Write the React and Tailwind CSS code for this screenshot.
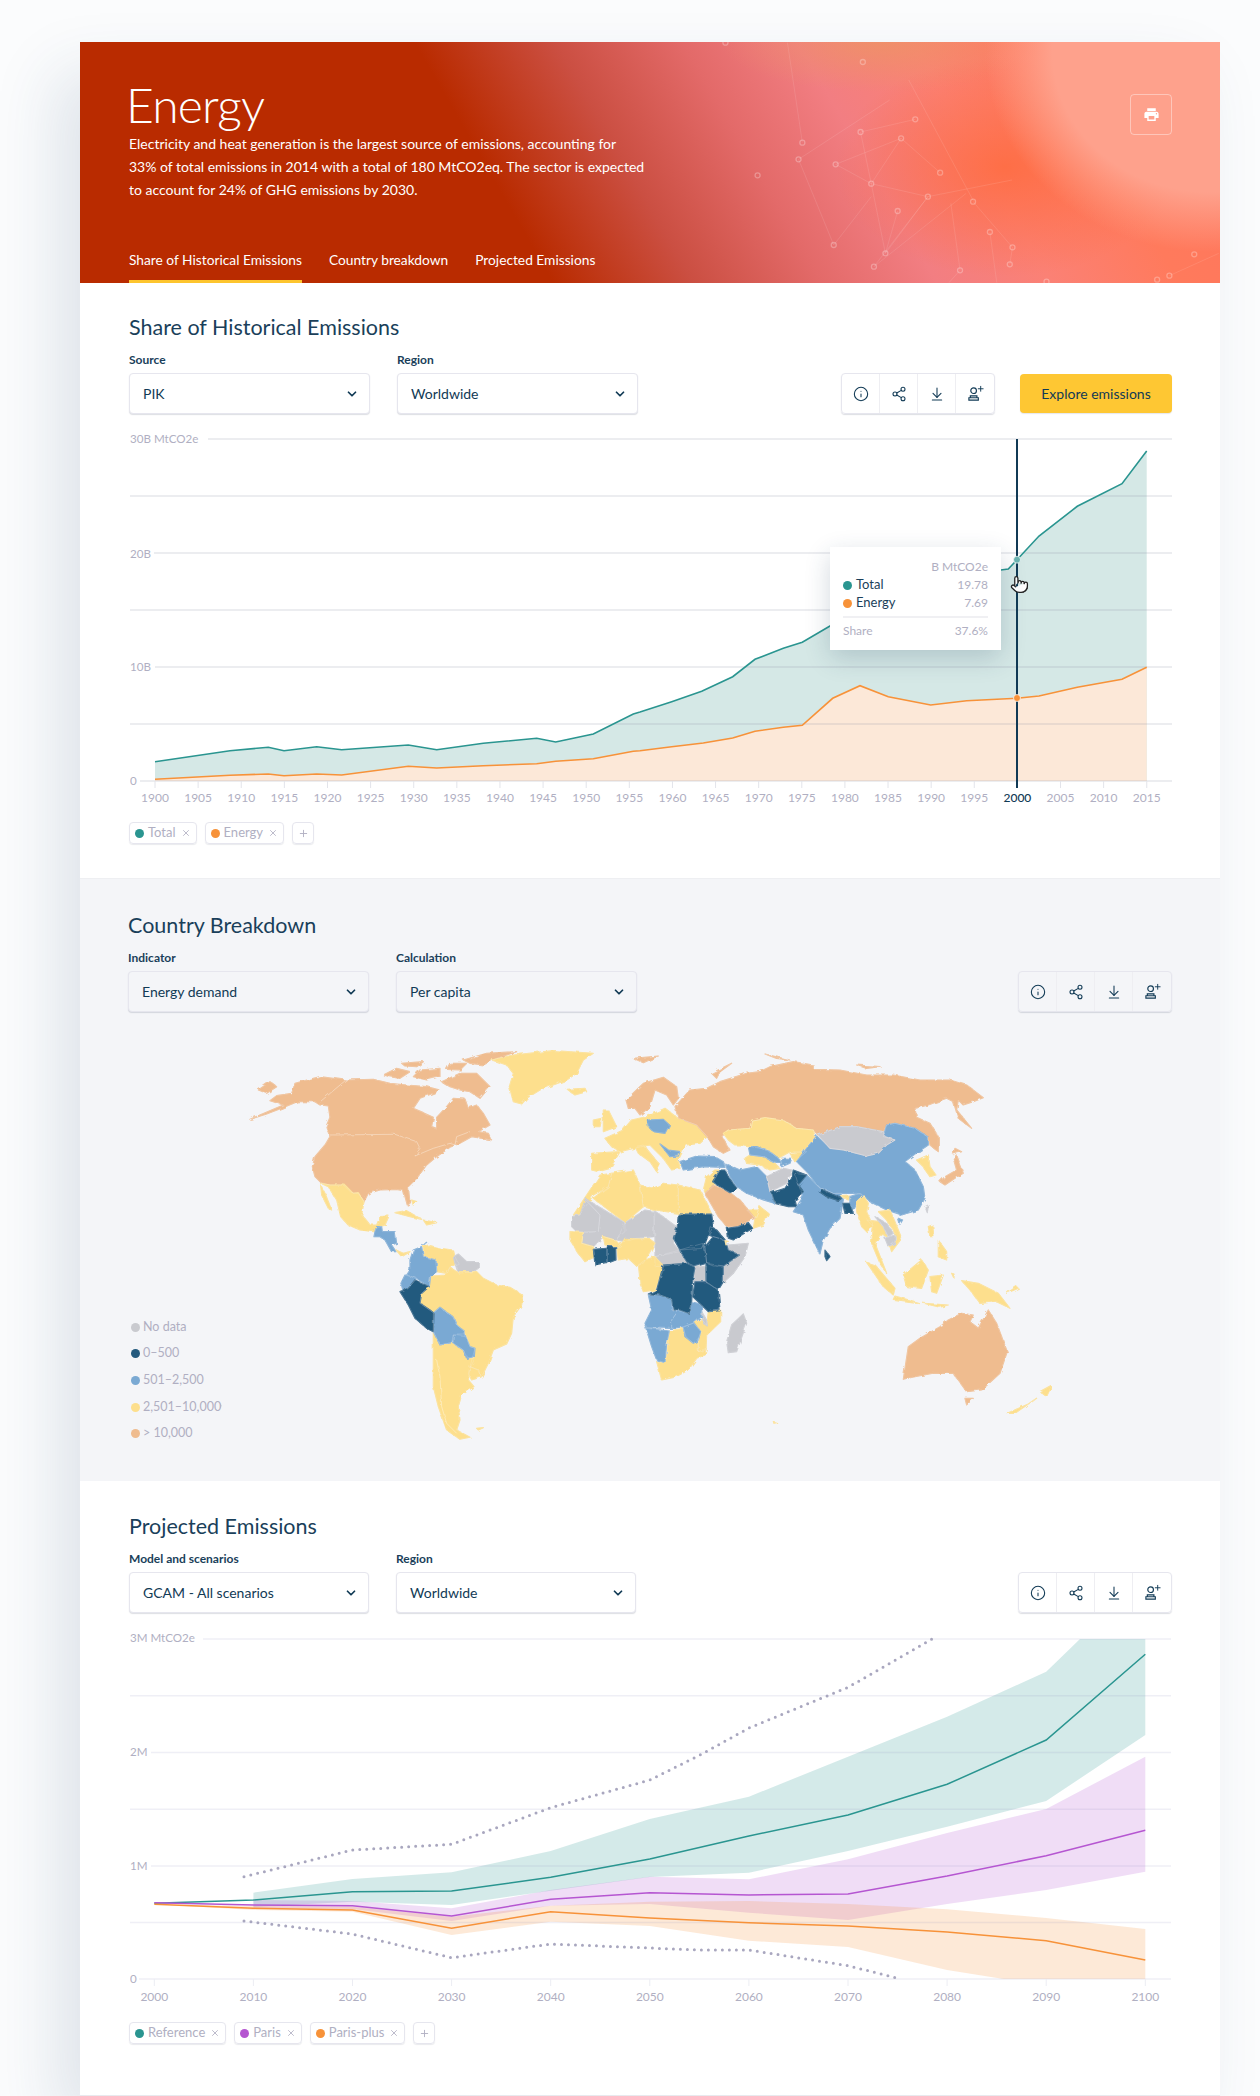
import React from 'react';
import { ChevronDown, Info, Share2, ArrowDownToLine, Plus, X, Pointer } from 'lucide-react';
import { MdPrint } from 'react-icons/md';

const TEAL = '#2a9590';
const ORANGE = '#f79239';
const PURPLE = '#b556d1';
const NAVY = '#113a55';
const MUTED = '#b0afc2';

const pts = (arr) => arr.map(([x, y]) => `${x.toFixed(1)},${y.toFixed(1)}`).join(' ');

// chart 1, read off the reference
const z10 = (a) => a.map(([x, y]) => [130 + x / 3, 600 + y / 3]);
const z11 = (a) => a.map(([x, y]) => [640 + x / 3, 430 + y / 3]);
const totalLine = [
  ...z10([[75, 485], [300, 452], [415, 442], [462, 452], [560, 440], [635, 449], [835, 435], [920, 449], [1060, 430], [1220, 415], [1277, 426], [1390, 402], [1510, 342]]),
  ...z11([[0, 846], [95, 815], [185, 784], [278, 740], [345, 688], [430, 655], [487, 637], [570, 588], [700, 520], [900, 440], [1082, 420], [1105, 417], [1131, 389], [1197, 318], [1312, 229], [1446, 161], [1520, 63]]),
];
const energyLine = [
  ...z10([[75, 538], [300, 526], [415, 522], [462, 527], [560, 522], [635, 525], [835, 499], [920, 504], [1060, 497], [1220, 491], [1277, 484], [1390, 476], [1510, 454]]),
  ...z11([[0, 962], [95, 950], [190, 939], [278, 924], [345, 904], [430, 892], [487, 886], [578, 805], [660, 767], [745, 800], [872, 825], [980, 812], [1131, 805], [1197, 798], [1312, 772], [1446, 748], [1520, 712]]),
];

const HistoricalChart = () => {
  const base = 781;
  const years = Array.from({ length: 24 }, (_, i) => 1900 + i * 5);
  const area = (l) => pts([[l[0][0], base], ...l, [l[l.length - 1][0], base]]);
  return (
    <svg viewBox="130 430 1042 375" className="block w-[1042px] h-[375px]">
      <polygon points={area(totalLine)} fill="#d5e8e6" />
      <polygon points={area(energyLine)} fill="#fce8d8" />
      {[
        [439, 208],
        [496, 130],
        [553, 154],
        [610, 130],
        [667, 155],
        [724, 130],
        [781, 140],
      ].map(([y, x]) => (
        <line key={y} x1={x} x2="1172" y1={y} y2={y} stroke="#8f93aa" strokeOpacity="0.22" strokeWidth="1.5" />
      ))}
      {years.map((y, i) => {
        const x = 155 + i * 43.12;
        return (
          <g key={y}>
            <line x1={x} x2={x} y1="781" y2="788" stroke="#e3e4ea" />
            <text x={x} y="802" textAnchor="middle" fontSize="12" fill={y === 2000 ? NAVY : MUTED} fontWeight={y === 2000 ? 500 : 400}>{y}</text>
          </g>
        );
      })}
      <text x="130" y="443" fontSize="11.6" fill={MUTED}>30B MtCO2e</text>
      <text x="130" y="557.5" fontSize="11.6" fill={MUTED}>20B</text>
      <text x="130" y="671" fontSize="11.6" fill={MUTED}>10B</text>
      <text x="130" y="785" fontSize="11.6" fill={MUTED}>0</text>
      <polyline points={pts(totalLine)} fill="none" stroke={TEAL} strokeWidth="1.6" />
      <polyline points={pts(energyLine)} fill="none" stroke={ORANGE} strokeWidth="1.6" />
      <line x1="1017" x2="1017" y1="439" y2="788" stroke={NAVY} strokeWidth="2" />
      <circle cx="1017" cy="559.7" r="3.5" fill="#6cb5b1" stroke="#fff" strokeOpacity="0.7" />
      <circle cx="1017" cy="698" r="3.5" fill={ORANGE} stroke="#fff" strokeOpacity="0.7" />
      <Pointer x="1010" y="575" width="19" height="19" fill="#fff" stroke="#222" strokeWidth="1.6" />
    </svg>
  );
};

// chart 2
const yearX = (y) => 154.3 + (y - 2000) * 9.91;
const series = (vals, start = 2000) => vals.map((v, i) => [yearX(start + i * 10), v]);
const refLine = series([1903.3, 1900, 1891.7, 1891, 1877.3, 1859, 1836, 1815, 1784.3, 1740, 1654.3]);
const parisLine = series([1902.7, 1905, 1905.7, 1916, 1899.3, 1892.7, 1895, 1894, 1876, 1855.7, 1830.3]);
const plusLine = series([1904.3, 1908.3, 1910, 1928.3, 1911.7, 1918, 1922.7, 1926, 1932, 1940.7, 1960]);
const band = (upper, lower) => pts([...upper, ...[...lower].reverse()]);

const refBand = band(
  [...series([1892.7, 1879, 1872.3, 1851, 1819, 1796.7, 1756.7, 1716.7, 1671.7], 2010), [1080, 1639], [yearX(2100), 1639]],
  series([1906.7, 1901.7, 1905, 1890.7, 1877, 1872.7, 1851, 1826.7, 1801, 1735], 2010),
);
const parisBand = band(
  series([1900, 1901, 1908.3, 1890, 1876.7, 1879.3, 1859.3, 1833, 1809, 1756.7], 2010),
  series([1908, 1909, 1921, 1905.7, 1904, 1912.7, 1920, 1904, 1890, 1871.7], 2010),
);
const plusBand = band(
  series([1904.3, 1906, 1906.7, 1916.7, 1905.7, 1901.7, 1901, 1904, 1909.3, 1918, 1929]),
  [...series([1904.3, 1910, 1911.7, 1935, 1921.7, 1926, 1940.7, 1947, 1970]), [1003.6, 1979], [yearX(2100), 1979]],
);
const dottedTop = [[244, 1876.7], [yearX(2020), 1850], [yearX(2030), 1844.3], [yearX(2040), 1807.7], [yearX(2050), 1780], [700, 1755], [yearX(2060), 1728], [yearX(2070), 1687.3], [932, 1639]];
const dottedBottom = [[244, 1921], [yearX(2020), 1934], [yearX(2030), 1957.7], [yearX(2040), 1944], [yearX(2050), 1948], [700, 1950], [yearX(2060), 1950], [yearX(2070), 1965.7], [901, 1979]];

const ProjectedChart = () => (
  <svg viewBox="130 1630 1042 375" className="block w-[1042px] h-[375px]">
    <polygon points={refBand} fill={TEAL} fillOpacity="0.2" />
    <polygon points={parisBand} fill={PURPLE} fillOpacity="0.2" />
    <polygon points={plusBand} fill={ORANGE} fillOpacity="0.2" />
    {[
      [1639, 203],
      [1695.7, 130],
      [1752.5, 151],
      [1809.3, 130],
      [1866, 151],
      [1922.5, 130],
      [1979, 139],
    ].map(([y, x]) => (
      <line key={y} x1={x} x2="1171" y1={y} y2={y} stroke="#8f8fc0" strokeOpacity="0.14" strokeWidth="1.5" />
    ))}
    {Array.from({ length: 11 }, (_, i) => 2000 + i * 10).map((y) => (
      <g key={y}>
        <line x1={yearX(y)} x2={yearX(y)} y1="1979" y2="1986" stroke="#ecedf3" />
        <text x={yearX(y)} y="2001" textAnchor="middle" fontSize="12" fill={MUTED}>{y}</text>
      </g>
    ))}
    <text x="130" y="1642" fontSize="11.6" fill={MUTED}>3M MtCO2e</text>
    <text x="130" y="1756" fontSize="11.6" fill={MUTED}>2M</text>
    <text x="130" y="1870" fontSize="11.6" fill={MUTED}>1M</text>
    <text x="130" y="1983" fontSize="11.6" fill={MUTED}>0</text>
    <polyline points={pts(dottedTop)} fill="none" stroke="#a9a7bf" strokeWidth="3" strokeLinecap="round" strokeDasharray="0 7" />
    <polyline points={pts(dottedBottom)} fill="none" stroke="#a9a7bf" strokeWidth="3" strokeLinecap="round" strokeDasharray="0 7" />
    <polyline points={pts(refLine)} fill="none" stroke={TEAL} strokeWidth="1.5" />
    <polyline points={pts(parisLine)} fill="none" stroke={PURPLE} strokeWidth="1.5" />
    <polyline points={pts(plusLine)} fill="none" stroke={ORANGE} strokeWidth="1.5" />
  </svg>
);

// map colours
const C = { o: '#efbc8f', y: '#fddf8d', b: '#7aa9d3', d: '#245a7e', g: '#c9cacf' };

// polygons in 3x crop coordinates, west half then east half
const WEST = [
  ['o', '90,268 140,252 185,235 232,215 285,215 300,225 325,228 330,262 318,290 330,320 315,345 285,380 277,410 285,440 303,458 330,465 370,465 395,488 415,490 432,515 445,490 480,480 530,478 550,482 562,525 570,520 565,470 590,445 620,405 650,380 690,352 720,340 755,320 815,330 805,310 775,305 810,285 790,250 770,225 745,235 735,207 700,205 680,230 650,262 650,295 635,290 640,262 610,248 580,235 600,205 640,190 660,180 620,170 560,165 510,160 460,148 378,150 300,140 225,160 215,190 170,197 150,212 190,225'],
  ['o', '665,155 720,130 770,130 810,170 780,205 750,185 720,180 690,170'],
  ['o', '730,90 800,70 890,65 830,85 790,105 750,100'],
  ['o', '690,100 740,100 720,120 680,118'],
  ['o', '490,135 530,115 570,125 540,145 510,140'],
  ['o', '545,100 610,95 590,110 555,108'],
  ['o', '600,120 660,115 660,140 620,150 580,140'],
  ['o', '115,180 150,155 170,170 140,190'],
  ['y', '815,90 880,75 1000,62 1120,70 1090,90 1070,130 1040,150 960,180 920,205 905,222 880,215 868,170 880,130 860,105'],
  ['y', '1042,178 1095,175 1100,185 1065,195'],
  ['y', '302,460 330,465 375,465 400,490 415,488 432,515 425,555 450,585 470,585 480,560 507,558 495,585 470,595 462,605 420,600 385,585 362,560 350,510 325,470'],
  ['y', '302,465 315,490 335,540 325,535 305,495'],
  ['b', '470,590 485,590 487,605 525,605 530,640 515,645 528,665 515,665 495,630 480,620 462,620 465,605'],
  ['y', '528,660 550,670 570,665 545,680'],
  ['y', '525,548 560,542 605,568 570,560'],
  ['y', '610,570 650,578 620,585'],
  ['y', '575,510 590,515 580,525'],
  ['y', '610,650 625,645 660,655 700,660 705,680 715,700 690,710 680,730 650,725 648,690 612,680'],
  ['g', '700,680 715,672 740,695 775,695 775,715 760,725 715,730 705,700'],
  ['y', '632,738 680,735 690,712 710,725 770,725 790,745 830,765 870,772 908,795 905,825 880,860 875,910 860,942 820,960 805,1000 785,1040 775,1020 750,1010 765,955 750,950 735,905 710,885 700,862 660,832 640,848 600,820 605,790 628,770'],
  ['y', '750,1010 780,1022 782,1042 755,1050 745,1030'],
  ['y', '640,905 660,945 695,938 730,960 745,985 765,985 750,1015 745,1050 762,1070 740,1085 725,1095 715,1130 720,1170 710,1200 750,1222 720,1228 680,1200 655,1130 640,1070 640,960'],
  ['y', '770,1195 790,1193 775,1200'],
  ['b', '620,637 605,650 580,660 570,690 570,720 560,735 590,745 628,770 632,738 650,725 648,690 610,680 605,650'],
  ['b', '555,735 590,745 565,775 550,785 543,760'],
  ['b', '640,850 660,832 700,862 710,885 735,905 735,920 700,915 695,938 660,945 640,905'],
  ['b', '700,915 735,915 750,950 765,955 763,980 740,985 730,960 700,940'],
  ['d', '540,785 565,775 585,750 628,770 605,790 600,820 630,840 642,850 640,905 620,895 585,865 565,825'],
  ['g', '0,1122 3,1127 0,1133'],
];

const EAST = [
  ['y', '10,240 25,240 50,290 10,305'],
  ['y', '-20,270 5,265 0,290 -20,290'],
  ['y', '-25,370 60,365 30,415 -5,425 -25,420'],
  ['y', '15,325 70,300 95,270 140,260 195,235 235,265 290,285 322,320 300,340 260,345 250,360 235,390 240,415 215,420 190,385 150,345 100,355 60,365 35,350'],
  ['y', '105,350 130,345 180,405 170,425 150,395 115,370'],
  ['b', '240,395 290,378 345,380 370,395 375,412 310,410 250,420'],
  ['b', '142,270 190,268 208,285 195,310 160,305 145,290'],
  ['b', '180,342 205,360 240,365 235,378 210,380'],
  ['o', '78,210 130,160 190,142 230,170 235,205 220,225 200,195 165,180 150,230 120,255 105,235 85,235'],
  ['o', '225,230 270,180 320,175 360,155 440,130 480,125 510,110 580,95 640,105 640,118 720,120 800,135 880,135 960,150 1050,150 1100,165 1150,203 1120,215 1090,225 1075,210 1070,240 1115,295 1075,265 1060,215 1040,205 985,225 945,235 950,262 990,280 1015,320 1015,365 990,345 985,322 945,295 885,280 860,285 850,305 770,290 720,290 655,315 640,300 590,295 550,270 495,263 455,270 450,295 385,300 365,320 390,360 370,370 340,350 325,325 290,285 235,265'],
  ['o', '335,130 395,100 360,125 350,145'],
  ['o', '100,85 175,78 130,98'],
  ['o', '495,72 570,90 530,85'],
  ['o', '770,105 840,110 800,115'],
  ['y', '370,310 385,300 450,295 455,270 495,263 550,270 590,295 640,300 645,320 620,350 610,365 570,365 535,385 505,360 455,350 430,345 405,345 385,330'],
  ['y', '435,385 450,375 490,380 520,395 540,415 510,420 480,405 440,400'],
  ['b', '445,350 470,350 510,365 535,385 545,400 520,395 490,380 450,375'],
  ['b', '545,385 575,385 570,400 545,410'],
  ['y', '570,370 620,365 585,395'],
  ['b', '590,395 620,355 650,318 690,355 730,360 800,378 835,370 860,345 885,330 850,320 860,285 885,280 945,295 985,322 985,345 955,365 915,395 945,420 970,470 975,505 955,540 905,555 860,540 810,515 790,495 770,490 745,490 700,490 655,470 625,430'],
  ['g', '655,315 720,290 770,290 850,305 855,320 885,330 860,345 835,370 800,378 730,360 690,355'],
  ['b', '895,565 908,570 900,583'],
  ['g', '975,530 985,525 982,548'],
  ['y', '950,390 985,375 990,410 1008,435 990,440 965,405'],
  ['o', '1020,455 1035,440 1070,420 1060,385 1070,375 1090,430 1065,445 1035,465'],
  ['o', '1065,355 1085,365 1060,372'],
  ['b', '375,400 420,420 470,410 500,440 510,480 525,520 490,510 440,490 410,470 390,440'],
  ['g', '500,440 550,415 575,420 560,460 510,485'],
  ['b', '585,430 620,435 655,470 700,490 725,490 730,510 720,565 690,595 670,630 660,672 625,600 610,555 580,545 610,500 595,465'],
  ['y', '725,500 750,498 745,510'],
  ['b', '750,500 780,490 790,495 770,520 760,545 750,520'],
  ['y', '770,515 790,495 805,520 800,545 820,590 800,605 785,590 770,545'],
  ['y', '800,570 840,575 865,620 840,615 825,640 860,730 840,700 815,640 820,590'],
  ['y', '835,545 870,540 885,575 905,625 875,665 870,650 890,630 880,600 855,565'],
  ['g', '825,560 860,580 880,610 865,620 850,590'],
  ['g', '855,625 885,615 885,640 865,650'],
  ['y', '465,565 480,530 505,550 490,585 460,595'],
  ['y', '440,540 475,540 465,565'],
  ['y', '310,480 320,440 345,420 360,420 340,455 345,465 315,490'],
  ['o', '315,490 340,465 390,488 420,510 465,565 440,575 415,590 380,590 355,560'],
  ['y', '235,465 300,480 310,500 335,552 235,552'],
  ['y', '120,465 160,475 190,460 235,465 235,550 165,540 130,530'],
  ['y', '-80,555 -30,480 0,435 35,430 25,470 -20,495 -60,555'],
  ['y', '25,470 35,430 100,420 120,465 130,530 75,578 -20,505'],
  ['g', '-85,560 -60,555 -45,510 0,555 -5,605 -70,605 -85,590'],
  ['g', '-45,505 75,578 75,605 45,630 10,620 -20,650 -55,640 -50,608 -5,605 0,555'],
  ['g', '75,578 135,540 165,545 160,620 110,625 75,635 50,630'],
  ['g', '160,540 230,590 220,640 240,665 165,680 165,625'],
  ['g', '165,680 240,660 260,700 190,708 165,710'],
  ['y', '-90,605 -50,608 -55,640 -20,650 -15,680 -45,695 -65,670 -90,630'],
  ['y', '10,620 45,630 65,650 40,650 15,645'],
  ['y', '50,650 65,640 75,625 150,628 165,640 150,665 130,700 110,708 85,685 55,690'],
  ['y', '115,705 135,690 165,680 190,708 188,725 165,780 130,785 120,760 118,730'],
  ['g', '385,645 445,640 435,680 400,730 370,758 370,710 418,675 385,660'],
  ['g', '287,712 320,708 318,755 280,755'],
  ['y', '325,845 362,840 362,875 320,915 318,960 295,965 295,925 305,905 282,880 305,868 320,885'],
  ['g', '305,845 320,870 322,888 310,880'],
  ['b', '145,795 180,795 215,808 215,840 235,842 215,870 215,895 140,893 135,880 155,840'],
  ['b', '215,870 235,842 265,850 275,818 305,825 305,860 280,880 250,890 215,895'],
  ['y', '208,903 250,895 258,920 280,940 295,925 295,965 318,955 315,975 290,985 265,1020 225,1042 185,1050 170,995 195,998 200,980'],
  ['b', '250,892 282,878 302,905 295,930 280,940 255,920'],
  ['b', '138,895 208,903 200,940 195,998 170,990 155,950'],
  ['d', '338,455 360,420 375,420 385,440 410,475 390,488 360,470'],
  ['d', '515,488 555,475 575,445 580,420 620,435 595,465 610,485 585,510 590,530 565,530 525,520'],
  ['d', '658,485 665,478 725,505 715,512 680,500'],
  ['d', '728,520 750,520 760,550 735,550'],
  ['d', '675,660 690,680 680,692 675,680'],
  ['d', '382,595 415,590 445,578 458,595 400,630 385,625'],
  ['d', '-20,658 20,655 20,697 -15,705'],
  ['d', '22,650 47,650 48,690 22,700'],
  ['d', '145,792 170,780 190,705 260,700 285,712 278,750 275,815 265,850 240,840 220,840 215,808 180,795'],
  ['d', '235,552 335,552 340,590 325,615 310,655 240,660 220,625 232,590'],
  ['d', '238,660 310,640 318,680 320,700 285,710 260,695'],
  ['d', '330,590 350,600 375,630 340,620 325,615'],
  ['d', '315,650 340,620 375,630 385,660 418,675 370,708 340,708 320,700'],
  ['y', '375,632 385,635 378,645'],
  ['d', '318,700 370,708 370,755 355,780 318,755'],
  ['d', '285,755 318,755 355,782 360,842 325,845 305,825 278,800'],
  ['g', '430,852 440,880 410,965 385,968 380,935 395,885'],
  ['y', '800,697 825,705 885,775 880,795 850,770'],
  ['y', '885,798 955,818 880,808'],
  ['y', '910,735 965,690 985,720 965,775 920,770'],
  ['y', '990,740 1030,735 1010,790 995,785'],
  ['y', '985,590 998,585 1002,620 990,620'],
  ['y', '1015,630 1040,665 1040,690 1015,680'],
  ['y', '1085,752 1135,760 1195,790 1230,835 1190,815 1140,820 1110,780'],
  ['y', '1055,730 1062,732 1062,745'],
  ['y', '1250,770 1255,775 1220,790'],
  ['y', '970,820 1045,825 1020,832'],
  ['o', '910,1048 925,950 960,925 1020,890 1045,870 1085,850 1120,855 1110,875 1135,895 1165,840 1190,880 1222,965 1200,1030 1145,1080 1100,1085 1060,1030 1000,1030 945,1040'],
  ['o', '1095,1105 1120,1105 1100,1125'],
  ['y', '1222,1150 1290,1120 1310,1105 1245,1150'],
  ['y', '1320,1085 1356,1065 1340,1100'],
  ['y', '520,1175 530,1178 522,1180'],
];

const Countries = ({ list }) => (
  <>
    {list.map(([c, p], i) => (
      <polygon key={i} points={p} fill={C[c]} stroke={C[c]} strokeWidth="3.5" strokeLinejoin="round" />
    ))}
    {list.map(([, p], i) => (
      <polygon key={i} points={p} fill="none" stroke="#f5f6f8" strokeOpacity="0.4" strokeWidth="1.4" strokeLinejoin="round" />
    ))}
  </>
);

const WorldMap = () => (
  <svg viewBox="80 1030 1140 451" className="block w-[1140px] h-[451px]">
    <defs>
      <filter id="coast" x="0" y="0" width="1" height="1">
        <feTurbulence type="fractalNoise" baseFrequency="0.16" numOctaves="2" seed="4" result="n" />
        <feDisplacementMap in="SourceGraphic" in2="n" scale="3.5" />
      </filter>
    </defs>
    <g filter="url(#coast)">
      <g transform="translate(220 1030) scale(0.3333)">
        <Countries list={WEST} />
        <polyline points="295,220 378,150" fill="none" stroke="#f8e0c8" strokeWidth="2" />
        <polyline points="330,315 525,313 560,325 590,335 600,355 585,378 640,355 690,340 705,345 710,320 750,305" fill="none" stroke="#f8e0c8" strokeWidth="2" />
        <polyline points="650,990 660,1040 665,1130 680,1180 710,1210" fill="none" stroke="#fef0c8" strokeWidth="2" />
      </g>
      <g transform="translate(600 1030) scale(0.3333)">
        <Countries list={EAST} />
      </g>
    </g>
  </svg>
);

const Select = ({ label, value, w = 'w-[241px]', bg = 'bg-white' }) => (
  <div>
    <div className="text-[12px] leading-4 font-bold text-[#1a3f5a] mb-[5px]">{label}</div>
    <div className={`${w} ${bg} h-[41px] rounded border border-[#e6e6ee] shadow-[0_1px_1px_rgba(40,50,80,0.16)] flex items-center justify-between pl-[13px] pr-[10px] text-[14px] text-[#113a55]`}>
      <span>{value}</span>
      <ChevronDown size={14} strokeWidth={3} />
    </div>
  </div>
);

const AddUser = () => (
  <svg viewBox="0 0 18 18" width="17" height="17" fill="none" stroke={NAVY} strokeWidth="1.2">
    <circle cx="7" cy="6" r="3" />
    <path d="M3.5 11.5h7v2h-7zM2 16h10v-2.5H2z" />
    <path d="M14.5 1v6M11.5 4h6" strokeWidth="1" />
  </svg>
);

const Actions = () => (
  <div className="flex h-[41px] rounded border border-[#e6e6ee] shadow-[0_1px_1px_rgba(40,50,80,0.16)] text-[#113a55] divide-x divide-[#eeeef2]">
    <div className="w-[38px] flex items-center justify-center"><Info size={16} strokeWidth={1.6} /></div>
    <div className="w-[38px] flex items-center justify-center"><Share2 size={16} strokeWidth={1.6} /></div>
    <div className="w-[38px] flex items-center justify-center"><ArrowDownToLine size={16} strokeWidth={1.6} /></div>
    <div className="w-[38px] flex items-center justify-center"><AddUser /></div>
  </div>
);

const Chip = ({ color, label }) => (
  <div className="h-[22px] flex items-center gap-[4px] px-[5px] rounded border border-[#e6e6ee] shadow-[0_1px_1px_rgba(40,50,80,0.1)] text-[13px] text-[#b0afc2]">
    <span className="w-[9px] h-[9px] rounded-full" style={{ background: color }} />
    <span>{label}</span>
    <X size={10} className="ml-[1px]" />
  </div>
);

const AddChip = () => (
  <div className="w-[22px] h-[22px] flex items-center justify-center rounded border border-[#e6e6ee] shadow-[0_1px_1px_rgba(40,50,80,0.1)] text-[#b0afc2]">
    <Plus size={11} />
  </div>
);

const NODES = [[171, 38], [530, 96], [372, 338], [362, 388], [459, 403], [524, 306], [630, 325], [255, 436], [552, 461], [700, 500], [621, 543], [732, 428], [454, 645], [589, 670], [559, 710], [784, 721], [862, 606], [921, 652], [914, 703], [818, 515], [1396, 673], [1331, 737], [1299, 749], [1010, 755], [667, 268]];
const LINKS = [
  [333, 38, 372, 338], [362, 388, 600, 210], [362, 388, 454, 645], [459, 403, 630, 325], [459, 403, 552, 461], [524, 306, 552, 461],
  [630, 325, 552, 461], [630, 325, 732, 428], [552, 461, 700, 500], [552, 461, 589, 670], [700, 500, 589, 670], [700, 500, 559, 710],
  [454, 645, 552, 500], [559, 710, 800, 490], [621, 543, 589, 670], [700, 500, 920, 450], [760, 520, 784, 721], [818, 515, 921, 652],
  [862, 606, 880, 758], [921, 652, 914, 703], [1331, 737, 1460, 670], [784, 721, 755, 758], [524, 306, 667, 268], [650, 150, 820, 515],
];
const nx = (x) => 580 + x / 2.613;
const ny = (y) => y / 3 - 12;

const HeroNetwork = () => (
  <svg viewBox="0 0 1140 241" className="absolute inset-0 w-full h-full">
    {LINKS.map(([a, b, c, d], i) => (
      <line key={i} x1={nx(a)} y1={ny(b)} x2={nx(c)} y2={ny(d)} stroke="#fff" strokeOpacity="0.1" />
    ))}
    {NODES.map(([x, y], i) => (
      <circle key={i} cx={nx(x)} cy={ny(y)} r="2.5" fill="none" stroke="#fff" strokeOpacity="0.28" strokeWidth="1.3" />
    ))}
  </svg>
);

const LEGEND = [
  ['#c9cacf', 'No data'],
  ['#245a7e', '0–500'],
  ['#7aa9d3', '501–2,500'],
  ['#fddf8d', '2,501–10,000'],
  ['#efbc8f', '> 10,000'],
];

export default function App() {
  return (
    <div className="h-[2096px] overflow-hidden bg-[#fbfcfd] pt-[42px] pl-[80px] font-['Lato',sans-serif]">
      <div className="relative w-[1140px] h-[2054px] bg-white shadow-[-24px_30px_60px_rgba(40,70,110,0.13)]">
        {/* hero */}
        <div className="relative h-[241px] overflow-hidden bg-[radial-gradient(ellipse_225px_200px_at_1130px_10px,#fea18c_70%,rgba(254,161,140,0)_100%),radial-gradient(ellipse_170px_110px_at_925px_125px,rgba(255,106,60,0.8)_0%,rgba(255,106,60,0)_100%),radial-gradient(ellipse_160px_50px_at_800px_0px,rgba(235,150,100,0.7)_0%,rgba(235,150,100,0)_100%),linear-gradient(60deg,#b92b00_0%,#b92b00_37%,#cb4f42_48%,#e36a69_58%,#f27e82_67%,#fb8175_76%,#ff7a5c_86%,#ff755c_100%)]">
          <HeroNetwork />
          <div className="relative pl-[49px] pt-[34px]">
            <h1 className="ml-[-3px] text-[48px] leading-[58px] font-light text-white tracking-[-0.8px]">Energy</h1>
            <p className="mt-[-2px] w-[516px] text-[14px] leading-[23px] text-white">
              Electricity and heat generation is the largest source of emissions, accounting for 33% of total emissions in 2014 with a total of 180 MtCO2eq. The sector is expected to account for 24% of GHG emissions by 2030.
            </p>
          </div>
          <div className="absolute right-[48px] top-[52px] w-[42px] h-[41px] rounded border border-white/40 flex items-center justify-center text-white">
            <MdPrint size={17} />
          </div>
          <div className="absolute left-[49px] bottom-0 flex gap-[27px] text-[13.75px] text-white">
            <div className="h-[46px] pt-[13px] border-b-[3px] border-[#fdc52f]">Share of Historical Emissions</div>
            <div className="h-[46px] pt-[13px]">Country breakdown</div>
            <div className="h-[46px] pt-[13px]">Projected Emissions</div>
          </div>
        </div>

        {/* share of historical emissions */}
        <section className="h-[595px] pt-[30px] px-[49px]">
          <h2 className="text-[21.5px] leading-7 text-[#1a3f5a]">Share of Historical Emissions</h2>
          <div className="mt-[11px] flex items-end">
            <div className="flex gap-[27px]">
              <Select label="Source" value="PIK" />
              <Select label="Region" value="Worldwide" />
            </div>
            <div className="ml-auto mr-[-1px] flex gap-[25px]">
              <Actions />
              <div className="w-[152px] h-[39px] mt-[1px] rounded bg-[#fec733] shadow-[0_1px_1px_rgba(40,50,80,0.12)] flex items-center justify-center text-[14px] text-[#113a55]">Explore emissions</div>
            </div>
          </div>
          <div className="relative mt-[16px] ml-[1px]">
            <HistoricalChart />
            <div className="absolute left-[700px] top-[117px] w-[171px] h-[103px] bg-white px-[13px] pt-[12px] text-[12px] shadow-[0_8px_24px_rgba(30,60,90,0.2)]">
              <div className="text-right leading-4 text-[#b0afc2]">B MtCO2e</div>
              <div className="mt-[1px] flex items-center h-[18px]">
                <span className="w-[9px] h-[9px] rounded-full bg-[#2a9590] mr-[4px]" />
                <span className="text-[#1a3f5a] text-[13px]">Total</span>
                <span className="ml-auto text-[#b0afc2]">19.78</span>
              </div>
              <div className="flex items-center h-[18px]">
                <span className="w-[9px] h-[9px] rounded-full bg-[#f79239] mr-[4px]" />
                <span className="text-[#1a3f5a] text-[13px]">Energy</span>
                <span className="ml-auto text-[#b0afc2]">7.69</span>
              </div>
              <div className="mt-[4px] pt-[4px] border-t-2 border-[#f0f0f3] flex text-[#b0afc2]">
                <span>Share</span>
                <span className="ml-auto">37.6%</span>
              </div>
            </div>
          </div>
          <div className="mt-[17px] flex gap-[8px]">
            <Chip color={TEAL} label="Total" />
            <Chip color={ORANGE} label="Energy" />
            <AddChip />
          </div>
        </section>

        {/* country breakdown */}
        <section className="relative h-[603px] bg-[#f4f5f8] border-t border-[#eeeff2] pt-[32px]">
          <div className="px-[48px]">
            <h2 className="text-[21.5px] leading-7 text-[#1a3f5a]">Country Breakdown</h2>
            <div className="mt-[11px] flex items-end">
              <div className="flex gap-[27px]">
                <Select label="Indicator" value="Energy demand" bg="bg-[#f4f5f8]" />
                <Select label="Calculation" value="Per capita" bg="bg-[#f4f5f8]" />
              </div>
              <div className="ml-auto"><Actions /></div>
            </div>
          </div>
          <div className="mt-[18px]"><WorldMap /></div>
          <div className="absolute left-[51px] top-[440px] flex flex-col gap-[10.7px]">
            {LEGEND.map(([c, t]) => (
              <div key={t} className="flex items-center gap-[3px] h-[16px] text-[12.5px] text-[#b0afc2]">
                <span className="w-[9px] h-[9px] rounded-full" style={{ background: c }} />
                {t}
              </div>
            ))}
          </div>
        </section>

        {/* projected emissions */}
        <section className="h-[615px] pt-[31px] px-[49px] border-b border-[#e8e9ee]">
          <h2 className="text-[21.5px] leading-7 text-[#1a3f5a]">Projected Emissions</h2>
          <div className="mt-[11px] flex items-end">
            <div className="flex gap-[27px]">
              <Select label="Model and scenarios" value="GCAM - All scenarios" w="w-[240px]" />
              <Select label="Region" value="Worldwide" w="w-[240px]" />
            </div>
            <div className="ml-auto mr-[-1px]"><Actions /></div>
          </div>
          <div className="mt-[17px] ml-[1px]"><ProjectedChart /></div>
          <div className="mt-[17px] flex gap-[8px]">
            <Chip color={TEAL} label="Reference" />
            <Chip color={PURPLE} label="Paris" />
            <Chip color={ORANGE} label="Paris-plus" />
            <AddChip />
          </div>
        </section>
      </div>
    </div>
  );
}
